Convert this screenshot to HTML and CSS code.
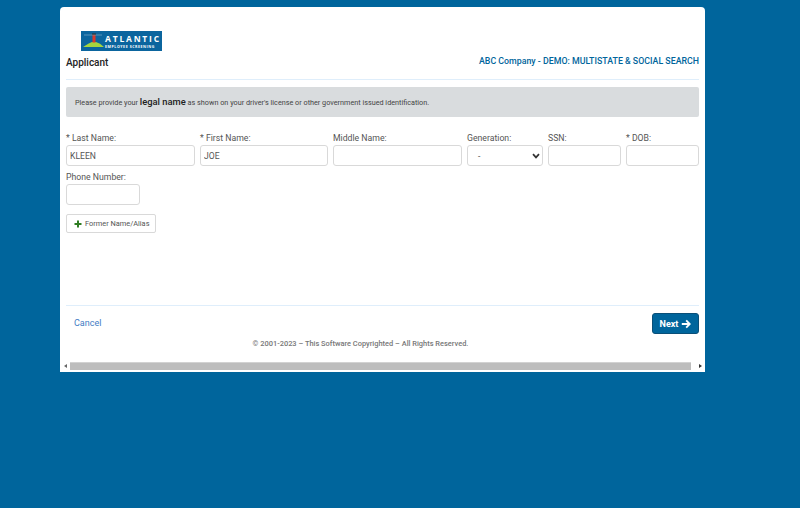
FILE: index.html
```html
<!DOCTYPE html>
<html lang="en">
<head>
<meta charset="utf-8">
<title>Applicant</title>
<link rel="stylesheet" href="styles.css">
</head>
<body>
<main class="card">
  <div class="content">
    <div class="logo">
      <svg class="logo-mark" width="24" height="20" viewBox="0 0 24 20">
        <path d="M2 16 Q8 12 11 11 L15 11 Q19 12 23 16 Z" fill="#a4d53f"/>
        <rect x="11.5" y="4" width="3" height="7.5" fill="#d8392b"/>
        <rect x="11" y="2.5" width="4" height="1.6" fill="#2b2b2b"/>
        <path d="M3 4 H21" stroke="#8fb4cc" stroke-width=".6"/>
      </svg>
      <div class="logo-text">
        <span class="logo-name">ATLANTIC</span>
        <span class="logo-sub">EMPLOYEE SCREENING</span>
      </div>
    </div>
    <header class="head">
      <h1 class="title">Applicant</h1>
      <div class="company">ABC Company - DEMO: MULTISTATE &amp; SOCIAL SEARCH</div>
    </header>
    <div class="alert">Please provide your <strong class="legal">legal name</strong> as shown on your driver's license or other government issued identification.</div>
    <form class="form">
      <div class="row">
        <label class="field f-last"><span class="lbl">* Last Name:</span><input class="ctl" value="KLEEN"></label>
        <label class="field f-first"><span class="lbl">* First Name:</span><input class="ctl" value="JOE"></label>
        <label class="field f-middle"><span class="lbl">Middle Name:</span><input class="ctl"></label>
        <label class="field f-gen"><span class="lbl">Generation:</span>
          <span class="select ctl"><span>-</span>
            <svg width="8" height="6" viewBox="0 0 8 6"><path d="M1 1.2 L4 4.4 L7 1.2" fill="none" stroke="#333" stroke-width="1.7"/></svg>
          </span>
        </label>
        <label class="field f-ssn"><span class="lbl">SSN:</span><input class="ctl"></label>
        <label class="field f-dob"><span class="lbl">* DOB:</span><input class="ctl"></label>
      </div>
      <div class="row row-2">
        <label class="field f-phone"><span class="lbl">Phone Number:</span><input class="ctl"></label>
      </div>
      <button type="button" class="alias">
        <svg width="8" height="8" viewBox="0 0 8 8"><path d="M4 0.5 V7.5 M0.5 4 H7.5" stroke="#2f7d22" stroke-width="2"/></svg>
        <span>Former Name/Alias</span>
      </button>
    </form>
    <div class="actions">
      <a class="cancel" href="#">Cancel</a>
      <button type="button" class="next">Next
        <svg width="10" height="10" viewBox="0 0 10 10"><path d="M0.8 5 H8.6 M5.2 1.4 L8.8 5 L5.2 8.6" fill="none" stroke="#fff" stroke-width="1.8"/></svg>
      </button>
    </div>
    <p class="copy">© 2001-2023 – This Software Copyrighted – All Rights Reserved.</p>
  </div>
  <div class="hscroll">
    <span class="arrow arrow-l"></span>
    <span class="thumb"></span>
    <span class="arrow arrow-r"></span>
  </div>
</main>
</body>
</html>
```
FILE: styles.css
```css
* { box-sizing: border-box; }
html, body { margin: 0; height: 100%; }
body {
  background: #00659c;
  font-family: Roboto, "Liberation Sans", sans-serif;
  color: #4a4a4a;
  padding: 7px 0 0 60px;
}
.card {
  width: 645px;
  height: 365px;
  background: #fff;
  border-radius: 4px 4px 0 0;
  display: flex;
  flex-direction: column;
  overflow: hidden;
}
.content { flex: 1; padding: 24px 6px 0; }
.logo {
  width: 81px;
  height: 20px;
  margin-left: 15px;
  background: #0b659e;
  display: flex;
  color: #fff;
}
.logo-mark { flex: none; }
.logo-text { display: flex; flex-direction: column; padding-top: 3px; }
.logo-name { font: 700 8.5px/10px "Open Sans", sans-serif; letter-spacing: 1.8px; white-space: nowrap; }
.logo-sub { font: 700 3.6px/5px "Open Sans", sans-serif; letter-spacing: .55px; white-space: nowrap; }
.head {
  display: flex;
  justify-content: space-between;
  align-items: center;
  height: 29px;
  padding-bottom: 5px;
  border-bottom: 1px solid #dfeefb;
  margin-bottom: 7px;
}
.title { margin: 0; font-size: 10px; font-weight: 500; color: #222; }
.company { font-size: 8.8px; font-weight: 500; color: #00659c; margin-top: -3px; }
.alert {
  height: 30px;
  background: #d9dcde;
  border-radius: 2px;
  font-size: 7.25px;
  line-height: 30px;
  padding-left: 9px;
  color: #444;
  white-space: nowrap;
}
.legal { font-size: 9.4px; font-weight: 500; color: #222; }
.form { padding-top: 15px; height: 189px; border-bottom: 1px solid #dfeefb; }
.row { display: flex; gap: 5px; }
.row-2 { margin-top: 5px; }
.field { display: flex; flex-direction: column; }
.lbl { font-size: 8.7px; line-height: 12px; height: 13px; color: #555; }
.ctl {
  height: 21px;
  width: 100%;
  border: 1px solid #d9d9d9;
  border-radius: 3px;
  background: #fff;
  font: 8.6px Roboto, sans-serif;
  color: #555;
  padding: 0 3px;
  outline: none;
}
.f-last { width: 129px; }
.f-first { width: 128px; }
.f-middle { width: 129px; }
.f-gen { width: 76px; }
.f-ssn { width: 73px; }
.f-dob { width: 73px; }
.f-phone { width: 74px; }
.select {
  display: flex;
  align-items: center;
  justify-content: space-between;
  padding: 0 2px 0 10px;
}
.alias {
  display: flex;
  align-items: center;
  gap: 3px;
  width: 90px;
  height: 19px;
  margin-top: 9px;
  padding: 0 0 0 7px;
  background: #fff;
  border: 1px solid #d9d9d9;
  border-radius: 2px;
  font: 7.4px Roboto, sans-serif;
  color: #555;
  white-space: nowrap;
}
.actions {
  display: flex;
  justify-content: space-between;
  align-items: center;
  height: 21px;
  margin-top: 7px;
}
.cancel {
  font-size: 9px;
  color: #3f7cc4;
  text-decoration: none;
  padding: 0 0 2px 8px;
}
.next {
  display: flex;
  align-items: center;
  justify-content: center;
  gap: 3px;
  width: 47px;
  height: 21px;
  background: #00659c;
  border: 1px solid #0a4f78;
  border-radius: 3px;
  font: 700 9px Roboto, sans-serif;
  color: #fff;
  padding: 0;
}
.copy {
  margin: 4px 0 0;
  padding-right: 44px;
  font-size: 7.45px;
  line-height: 11px;
  font-weight: 500;
  text-align: center;
  color: #777;
}
.hscroll {
  height: 10px;
  padding-bottom: 2px;
  display: flex;
  align-items: stretch;
  background: #fff;
  flex: none;
}
.arrow { width: 10px; display: flex; align-items: center; justify-content: center; }
.arrow::before {
  content: "";
  border-top: 2.5px solid transparent;
  border-bottom: 2.5px solid transparent;
}
.arrow-l::before { border-right: 3px solid #666; }
.arrow-r::before { border-left: 3px solid #333; }
.thumb { flex: 1; background: #bdbdbd; border-top: 1px solid #d2d2d2; margin-right: 4px; }
```
